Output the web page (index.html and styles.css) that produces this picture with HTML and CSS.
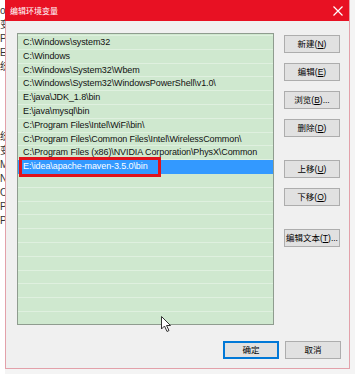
FILE: index.html
```html
<!DOCTYPE html>
<html lang="zh-CN">
<head>
    <meta charset="UTF-8">
    <title>编辑环境变量</title>
    <link rel="stylesheet" href="styles.css">
</head>
<body>
    <div class="behind">
        <p>on</p>
        <p>变</p>
        <p>Pa</p>
        <p>E</p>
        <p>统</p>
        <p>&nbsp;</p>
        <p>&nbsp;</p>
        <p>&nbsp;</p>
        <p>&nbsp;</p>
        <p>统</p>
        <p>变</p>
        <p>M</p>
        <p>N</p>
        <p>O</p>
        <p>Pa</p>
        <p>PA</p>
    </div>

    <div class="dialog">
        <div class="title-bar">
            <span>编辑环境变量</span>
            <svg class="close" width="10" height="10" viewBox="0 0 10 10">
                <path d="M0.5 0.5 L9.5 9.5 M9.5 0.5 L0.5 9.5" stroke="#fff" stroke-width="1.2"/>
            </svg>
        </div>

        <div class="dialog-body">
            <div class="main-row">
                <div class="list">
                    <div class="row">C:\Windows\system32</div>
                    <div class="row">C:\Windows</div>
                    <div class="row">C:\Windows\System32\Wbem</div>
                    <div class="row">C:\Windows\System32\WindowsPowerShell\v1.0\</div>
                    <div class="row">E:\java\JDK_1.8\bin</div>
                    <div class="row">E:\java\mysql\bin</div>
                    <div class="row">C:\Program Files\Intel\WiFi\bin\</div>
                    <div class="row">C:\Program Files\Common Files\Intel\WirelessCommon\</div>
                    <div class="row">C:\Program Files (x86)\NVIDIA Corporation\PhysX\Common</div>
                    <div class="row selected"><span class="mark">E:\idea\apache-maven-3.5.0\bin</span></div>
                </div>

                <div class="side-buttons">
                    <div class="group">
                        <button>新建(<u>N</u>)</button>
                        <button>编辑(<u>E</u>)</button>
                        <button>浏览(<u>B</u>)...</button>
                        <button>删除(<u>D</u>)</button>
                    </div>
                    <div class="group">
                        <button>上移(<u>U</u>)</button>
                        <button>下移(<u>O</u>)</button>
                    </div>
                    <div class="group">
                        <button>编辑文本(<u>T</u>)...</button>
                    </div>
                </div>
            </div>

            <div class="footer">
                <button class="default">确定</button>
                <button>取消</button>
            </div>
        </div>

        <svg class="cursor" width="12" height="17" viewBox="0 0 12 17">
            <path d="M0.5 0.5 L0.5 13 L3.5 10 L6 15.5 L8 14.5 L5.5 9.5 L9.5 9.5 Z" fill="#fff" stroke="#333" stroke-width="1"/>
        </svg>
    </div>
</body>
</html>
```

FILE: styles.css
```css
body {
    margin: 0;
    width: 355px;
    height: 374px;
    display: flex;
    background-color: #f4f4f4;
    font-family: "Liberation Sans", "Noto Sans CJK SC", sans-serif;
    overflow: hidden;
}
.behind {
    width: 5px;
    overflow: hidden;
    background: #fff;
    padding-top: 4px;
    font-size: 10px;
    color: #333;
}
.behind p {
    margin: 0;
    height: 14px;
    line-height: 14px;
    white-space: nowrap;
}
.dialog {
    position: relative;
    width: 343px;
    height: 368px;
    background-color: #f0f0f0;
    border: 1px solid #e3a1aa;
    border-top: none;
    display: flex;
    flex-direction: column;
}
.title-bar {
    height: 21px;
    background-color: #e81123;
    color: white;
    font-size: 8px;
    display: flex;
    align-items: center;
    justify-content: space-between;
    padding: 0 6px 0 5px;
    margin-left: -1px;
}
.dialog-body {
    padding: 12px 8px 0 11px;
}
.main-row {
    display: flex;
    gap: 10px;
}
.list {
    width: 255px;
    height: 288px;
    border: 1px solid #8f9c8f;
    padding-top: 2px;
    font-size: 9px;
    letter-spacing: -0.1px;
    color: #111;
    background-color: #cfe8cf;
    background-image: repeating-linear-gradient(to bottom, transparent 0, transparent 12.8px, #dff0df 12.8px, #dff0df 13.8px);
    background-position: 0 2px;
    overflow: hidden;
}
.row {
    height: 13.8px;
    line-height: 13.8px;
    padding-left: 5px;
    white-space: nowrap;
}
.row.selected {
    background-color: #3399ff;
    color: white;
    padding-left: 4px;
}
.mark {
    display: inline-block;
    line-height: 13.8px;
    padding: 0 10px 0 1px;
    outline: 3px solid #e0121b;
}
.side-buttons {
    padding-top: 2px;
    display: flex;
    flex-direction: column;
    gap: 23px;
}
.group {
    display: flex;
    flex-direction: column;
    gap: 10px;
}
button {
    width: 56px;
    height: 18px;
    padding: 0;
    background-color: #e1e1e1;
    border: 1px solid #adadad;
    font-family: "Liberation Sans", "Noto Sans CJK SC", sans-serif;
    font-size: 8.5px;
    color: #000;
    line-height: 16px;
    white-space: nowrap;
}
.footer {
    display: flex;
    justify-content: flex-end;
    gap: 6px;
    margin-top: 16px;
}
button.default {
    border: 1px solid #0078d7;
    box-shadow: inset 0 0 0 1px #0078d7;
}
.cursor {
    position: absolute;
    left: 155px;
    top: 316px;
}
```
